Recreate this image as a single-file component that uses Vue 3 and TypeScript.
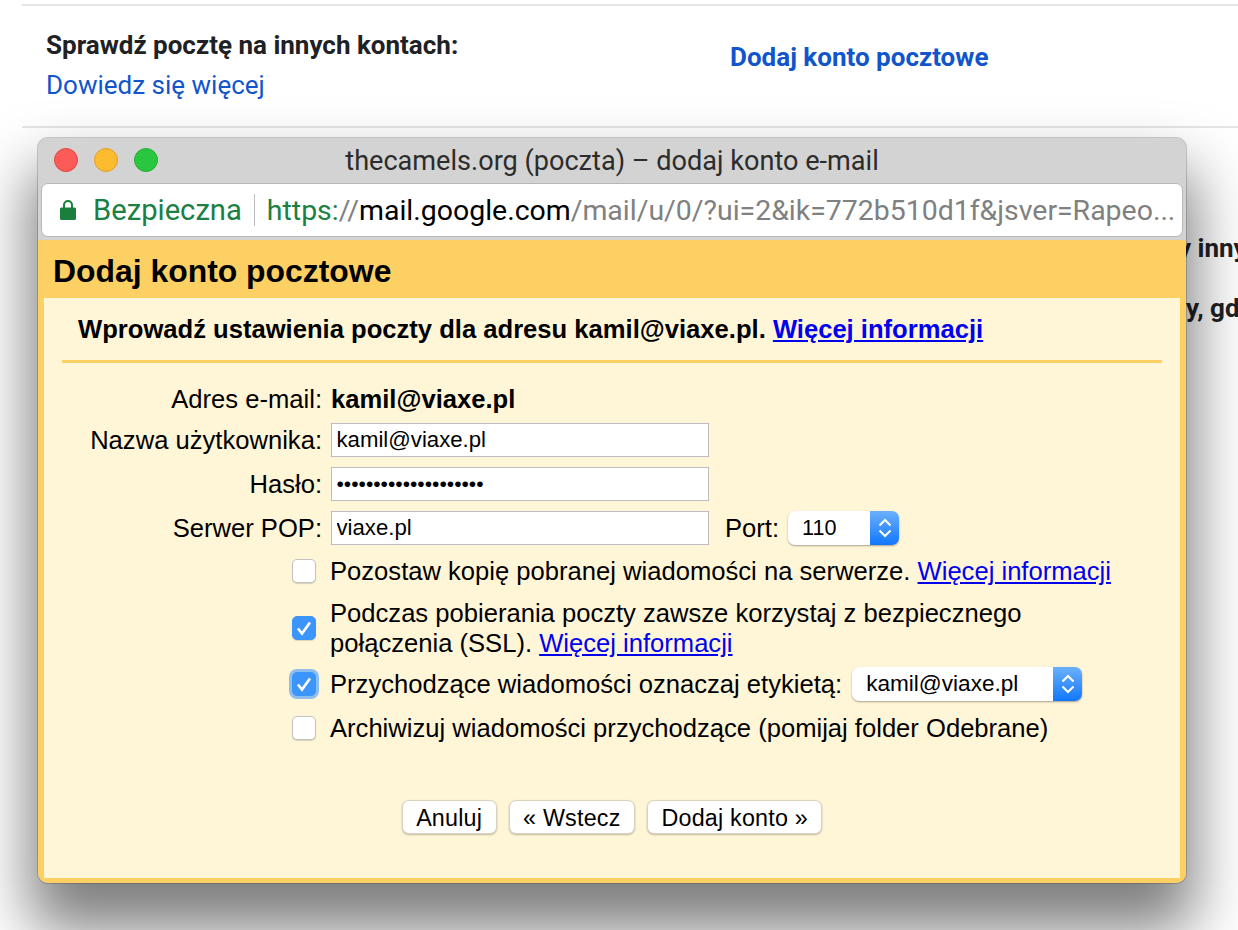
<template>
  <div class="page">
    <div class="page-rows">
      <div class="row first">
        <div class="row-left">
          <div class="row-title">Sprawdź pocztę na innych kontach:</div>
          <a class="learn">Dowiedz się więcej</a>
        </div>
        <a class="add-link">Dodaj konto pocztowe</a>
      </div>
      <div class="peek peek-one">y innych</div>
      <div class="peek peek-two">y, gdy</div>
    </div>

    <div class="window">
      <div class="titlebar">
        <div class="lights">
          <span class="light red"></span>
          <span class="light yellow"></span>
          <span class="light green"></span>
        </div>
        <div class="win-title">thecamels.org (poczta) – dodaj konto e-mail</div>
      </div>
      <div class="addressbar">
        <svg class="lock" width="16" height="20" viewBox="0 0 16 20">
          <path d="M4 8V5a4 4 0 0 1 8 0v3" fill="none" stroke="#1a7f3c" stroke-width="2" />
          <rect x="0" y="7.5" width="16" height="12.5" rx="1.5" fill="#1a7f3c" />
        </svg>
        <span class="secure">Bezpieczna</span>
        <span class="divider"></span>
        <span class="url"><span class="url-green">https:</span><span class="url-gray">//</span><span class="url-host">mail.google.com</span><span class="url-gray">/mail/u/0/?ui=2&amp;ik=772b510d1f&amp;jsver=Rapeo...</span></span>
      </div>

      <div class="dialog">
        <h1 class="dialog-title">Dodaj konto pocztowe</h1>
        <div class="dialog-body">
          <div class="intro">
            <b>Wprowadź ustawienia poczty dla adresu kamil@viaxe.pl.</b>&nbsp;<a class="link bold">Więcej informacji</a>
          </div>
          <div class="rule"></div>

          <div class="form">
            <label class="lbl">Adres e-mail:</label>
            <b class="val">kamil@viaxe.pl</b>
            <label class="lbl">Nazwa użytkownika:</label>
            <input class="field" type="text" value="kamil@viaxe.pl" />
            <label class="lbl">Hasło:</label>
            <input class="field pass" type="password" value="12345678901234567890" />
            <label class="lbl">Serwer POP:</label>
            <div class="server-row">
              <input class="field" type="text" value="viaxe.pl" />
              <span class="port-label">Port:</span>
              <div class="select port">
                <span class="select-value">110</span>
                <span class="select-arrows">
                  <svg width="16" height="26" viewBox="0 0 16 26"><path d="M2.500 10.500L8 5l5.500 5.500M2.500 15.500L8 21l5.500-5.500" fill="none" stroke="#fff" stroke-width="2" /></svg>
                </span>
              </div>
            </div>
          </div>

          <div class="options">
            <div class="opt opt-keep">
              <span class="check"></span>
              <span>Pozostaw kopię pobranej wiadomości na serwerze. <a class="link">Więcej informacji</a></span>
            </div>
            <div class="opt opt-ssl">
              <span class="check on">
                <svg width="18" height="18" viewBox="0 0 18 18"><path d="M3 9.500l4 5 8-11" fill="none" stroke="#fff" stroke-width="2.600" /></svg>
              </span>
              <span>Podczas pobierania poczty zawsze korzystaj z bezpiecznego<br />połączenia (SSL). <a class="link">Więcej informacji</a></span>
            </div>
            <div class="opt opt-label">
              <span class="check on focus">
                <svg width="18" height="18" viewBox="0 0 18 18"><path d="M3 9.500l4 5 8-11" fill="none" stroke="#fff" stroke-width="2.600" /></svg>
              </span>
              <span>Przychodzące wiadomości oznaczaj etykietą:</span>
              <div class="select label-select">
                <span class="select-value">kamil@viaxe.pl</span>
                <span class="select-arrows">
                  <svg width="16" height="26" viewBox="0 0 16 26"><path d="M2.500 10.500L8 5l5.500 5.500M2.500 15.500L8 21l5.500-5.500" fill="none" stroke="#fff" stroke-width="2" /></svg>
                </span>
              </div>
            </div>
            <div class="opt opt-arch">
              <span class="check"></span>
              <span>Archiwizuj wiadomości przychodzące (pomijaj folder Odebrane)</span>
            </div>
          </div>

          <div class="buttons">
            <button class="btn">Anuluj</button>
            <button class="btn">« Wstecz</button>
            <button class="btn">Dodaj konto »</button>
          </div>
        </div>
      </div>
    </div>
  </div>
</template>

<script setup lang="ts">
</script>

<style>
html,
body {
  margin: 0;
  background: #fff;
}
</style>

<style scoped>
.page {
  position: relative;
  width: 1238px;
  height: 930px;
  overflow: hidden;
  background: #fff;
  font-family: "Liberation Sans", Arial, sans-serif;
  color: #000;
}

.page-rows {
  margin: 4px 0 0 22px;
  font-family: Roboto, "Liberation Sans", sans-serif;
}

.row {
  display: flex;
  height: 124px;
  box-sizing: border-box;
  border-top: 2px solid #e6e6e6;
  border-bottom: 2px solid #e6e6e6;
  padding: 24px 0 0 24px;
}

.row-left {
  width: 684px;
}

.row-title {
  font-size: 26px;
  line-height: 30px;
  font-weight: 700;
  color: #202124;
}

.learn {
  display: block;
  margin-top: 10px;
  font-size: 26px;
  line-height: 30px;
  color: #1155cc;
}

.add-link {
  margin-top: 12px;
  font-size: 26px;
  line-height: 30px;
  font-weight: 700;
  color: #1155cc;
}

.peek {
  position: absolute;
  font-size: 26px;
  line-height: 30px;
  font-weight: 700;
  white-space: nowrap;
  color: #202124;
}

.peek-one {
  left: 1178px;
  top: 233px;
}

.peek-two {
  left: 1186px;
  top: 293px;
}

.window {
  position: absolute;
  left: 38px;
  top: 138px;
  width: 1148px;
  height: 745px;
  box-sizing: border-box;
  display: flex;
  flex-direction: column;
  border-radius: 10px;
  overflow: hidden;
  background: #d3d3d3;
  box-shadow: 0 39px 60px 8px rgba(0, 0, 0, 0.51), 0 0 0 1px rgba(0, 0, 0, 0.18);
}

.titlebar {
  position: relative;
  height: 45px;
  flex: none;
  display: flex;
  align-items: center;
  justify-content: center;
}

.lights {
  position: absolute;
  left: 16px;
  top: 10px;
  display: flex;
  gap: 16px;
}

.light {
  width: 24px;
  height: 24px;
  border-radius: 50%;
  box-sizing: border-box;
}

.red {
  background: #fc5b57;
  border: 1px solid #e14640;
}

.yellow {
  background: #fdbc2f;
  border: 1px solid #df9f25;
}

.green {
  background: #29c73f;
  border: 1px solid #22ad33;
}

.win-title {
  font-family: Roboto, "Liberation Sans", sans-serif;
  font-size: 27.1px;
  color: #2c2c2c;
}

.addressbar {
  flex: none;
  height: 54px;
  margin: 0 3px;
  box-sizing: border-box;
  display: flex;
  align-items: center;
  padding-left: 18px;
  background: #fff;
  border: 1px solid #b7b7b7;
  border-radius: 7px;
  font-family: Roboto, "Liberation Sans", sans-serif;
  font-size: 28.45px;
  white-space: nowrap;
  overflow: hidden;
}

.lock {
  flex: none;
  margin-right: 17px;
}

.secure {
  font-size: 29.2px;
  color: #1a8044;
}

.divider {
  width: 1px;
  height: 32px;
  margin: 0 12px;
  background: #bdbdbd;
}

.url-green {
  color: #1a8044;
}

.url-gray {
  color: #808080;
}

.url-host {
  color: #000;
}

.dialog {
  flex: 1;
  margin-top: 3px;
  display: flex;
  flex-direction: column;
  padding: 0 6px 5px;
  background: #fcd063;
}

.dialog-title {
  margin: 0;
  height: 58px;
  padding-left: 9px;
  font-size: 31.9px;
  line-height: 62px;
  font-weight: 700;
}

.dialog-body {
  flex: 1;
  background: #fff5d7;
  padding: 0 18px;
  font-size: 25.6px;
}

.intro {
  height: 62px;
  box-sizing: border-box;
  padding: 16px 0 0 16px;
  line-height: 30px;
}

.rule {
  height: 3px;
  background: #fcd063;
}

.link {
  color: #0000ee;
  text-decoration: underline;
}

.bold {
  font-weight: 700;
}

.form {
  display: grid;
  grid-template-columns: 260px 1fr;
  grid-template-rows: 38px 44px 44px 44px;
  column-gap: 9px;
  align-items: center;
  margin-top: 17px;
}

.lbl {
  text-align: right;
}

.field {
  width: 378px;
  height: 34px;
  box-sizing: border-box;
  padding: 0 4.500px;
  border: 1px solid #bdbdbd;
  background: #fff;
  font-family: "Liberation Sans", Arial, sans-serif;
  font-size: 22.2px;
  color: #000;
  outline: none;
}

.pass {
  font-size: 21px;
}

.server-row {
  display: flex;
  align-items: center;
}

.port-label {
  margin: 0 9px 0 16px;
}

.select {
  display: flex;
  height: 34px;
  box-sizing: border-box;
  border-radius: 7px;
  overflow: hidden;
  background: #fff;
  box-shadow: 0 1px 2px rgba(0, 0, 0, 0.35);
  font-size: 22.6px;
}

.port {
  width: 111px;
  font-size: 21.6px;
}

.label-select {
  width: 230px;
  margin-left: 10px;
}

.select-value {
  flex: 1;
  padding-left: 14px;
  line-height: 34px;
}

.select-arrows {
  width: 29px;
  display: flex;
  align-items: center;
  justify-content: center;
  background: linear-gradient(#6cb0fb, #1177fb);
}

.options {
  padding-left: 230px;
}

.opt {
  display: flex;
  align-items: center;
  line-height: 30px;
}

.opt-keep {
  height: 42px;
}

.opt-ssl {
  margin-top: 6px;
  height: 60px;
}

.opt-label {
  margin-top: 4px;
  height: 44px;
}

.opt-arch {
  height: 44px;
}

.check {
  flex: none;
  width: 24px;
  height: 24px;
  margin-right: 14px;
  box-sizing: border-box;
  display: flex;
  align-items: center;
  justify-content: center;
  background: #fff;
  border: 1px solid #c2c2c2;
  border-radius: 5px;
  box-shadow: 0 1px 1px rgba(0, 0, 0, 0.15);
}

.on {
  background: #3c95fb;
  border-color: #3c95fb;
}

.focus {
  box-shadow: 0 0 0 3px #8ebef0;
}

.buttons {
  display: flex;
  justify-content: center;
  gap: 12px;
  margin-top: 50px;
}

.btn {
  height: 34px;
  padding: 2px 13.500px 0;
  border: 1px solid #d8d2bf;
  border-radius: 7px;
  background: #fff;
  box-shadow: 0 1px 2px rgba(0, 0, 0, 0.25);
  font-family: "Liberation Sans", Arial, sans-serif;
  font-size: 23.3px;
  letter-spacing: 0.2px;
  color: #000;
}
</style>
